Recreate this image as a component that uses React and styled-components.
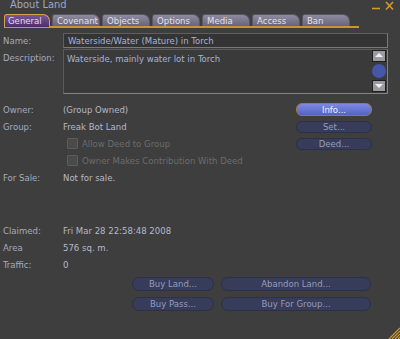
import React from 'react';
import styled, { createGlobalStyle } from 'styled-components';

const GlobalStyle = createGlobalStyle`
  html, body {
    margin: 0;
    padding: 0;
    background: #3e3e3e;
  }
  body {
    font-family: "DejaVu Sans Condensed", "DejaVu Sans", sans-serif;
    font-stretch: condensed;
    font-size: 9.5px;
  }
`;

const tabs = ['General', 'Covenant', 'Objects', 'Options', 'Media', 'Access', 'Ban'];

const App = () => (
  <>
    <GlobalStyle />
    <Window>
      <TitleBar>
        <Title>About Land</Title>
        <Controls viewBox="0 0 24 10">
          <path d="M1 7.5 H9" stroke="#d49a28" strokeWidth="1.6" />
          <path d="M15 1 L22 8.5 M22 1 L15 8.5" stroke="#d49a28" strokeWidth="1.6" />
        </Controls>
      </TitleBar>

      <TabRow>
        {tabs.map((t, i) => (
          <Tab key={t} $active={i === 0}>{t}</Tab>
        ))}
      </TabRow>

      <Panel>
        <Row $height={18}>
          <Label>Name:</Label>
          <Field>Waterside/Water (Mature) in Torch</Field>
        </Row>

        <Row $height={48} $top>
          <Label $pad={3}>Description:</Label>
          <TextArea>
            <AreaText>Waterside, mainly water lot in Torch</AreaText>
            <Scroll>
              <Arrow />
              <Thumb />
              <Arrow $down />
            </Scroll>
          </TextArea>
        </Row>

        <Row $height={17} $mt={4}>
          <Label>Owner:</Label>
          <Value>(Group Owned)</Value>
          <Button $primary>Info...</Button>
        </Row>
        <Row $height={17}>
          <Label>Group:</Label>
          <Value>Freak Bot Land</Value>
          <Button>Set...</Button>
        </Row>
        <Row $height={17}>
          <Label />
          <Check />
          <Value $disabled>Allow Deed to Group</Value>
          <Button>Deed...</Button>
        </Row>
        <Row $height={17}>
          <Label />
          <Check />
          <Value $disabled>Owner Makes Contribution With Deed</Value>
        </Row>
        <Row $height={17}>
          <Label>For Sale:</Label>
          <Value>Not for sale.</Value>
        </Row>

        <Spacer />

        <Row $height={17}>
          <Label>Claimed:</Label>
          <Value>Fri Mar 28 22:58:48 2008</Value>
        </Row>
        <Row $height={17}>
          <Label>Area</Label>
          <Value>576 sq. m.</Value>
        </Row>
        <Row $height={17}>
          <Label>Traffic:</Label>
          <Value>0</Value>
        </Row>

        <ButtonGrid>
          <Button $w={82}>Buy Land...</Button>
          <Button $w={150}>Abandon Land...</Button>
          <Button $w={82}>Buy Pass...</Button>
          <Button $w={150}>Buy For Group...</Button>
        </ButtonGrid>
      </Panel>

      <Grip viewBox="0 0 12 12">
        <path d="M12 1 L1 12 M12 4 L4 12 M12 7 L7 12 M12 10 L10 12" stroke="#d09a30" strokeWidth="1.2" />
      </Grip>
    </Window>
  </>
);

export default App;

const Window = styled.div`
  position: relative;
  width: 400px;
  height: 339px;
  overflow: hidden;
  background: #3e3e3e;
  color: #a8aec2;
  display: flex;
  flex-direction: column;
`;

const TitleBar = styled.div`
  height: 14px;
  display: flex;
  align-items: flex-start;
  justify-content: space-between;
  padding: 0 5px 0 10px;
`;

const Title = styled.div`
  font-size: 11px;
  line-height: 11px;
  margin-top: -1px;
  color: #9ea6c6;
`;

const Controls = styled.svg`
  width: 24px;
  height: 10px;
  margin-top: 1px;
`;

const TabRow = styled.div`
  display: flex;
  gap: 2px;
  width: 355px;
  margin-left: 4px;
  height: 12px;
  border-bottom: 2px solid #c8943a;
`;

const Tab = styled.div`
  width: ${(p) => (p.$active ? '46px' : '48px')};
  box-sizing: border-box;
  height: ${(p) => (p.$active ? '13px' : '12px')};
  padding: 0 0 0 ${(p) => (p.$active ? '3px' : '4px')};
  line-height: 12px;
  color: ${(p) => (p.$active ? '#e4dcf4' : '#e2e2ec')};
  border-radius: 3px 7px 0 0;
  background: ${(p) =>
    p.$active
      ? 'linear-gradient(#7a5898, #4a2e6a)'
      : 'linear-gradient(#8e8aa0, #68647a)'};
  border: ${(p) => (p.$active ? '1px solid #d4a44a' : '1px solid #5a5668')};
  border-bottom: none;
  white-space: nowrap;
  overflow: hidden;
`;

const Panel = styled.div`
  display: flex;
  flex-direction: column;
  padding-top: 3px;
`;

const Row = styled.div`
  display: flex;
  align-items: ${(p) => (p.$top ? 'flex-start' : 'center')};
  height: ${(p) => p.$height}px;
  margin-top: ${(p) => p.$mt || 0}px;
  padding-left: 3px;
`;

const Label = styled.div`
  width: 60px;
  flex: none;
  padding-top: ${(p) => p.$pad || 0}px;
  color: #a4aabe;
`;

const Value = styled.div`
  flex: 1;
  white-space: nowrap;
  color: ${(p) => (p.$disabled ? '#6c6c6c' : '#b4b9ca')};
`;

const Field = styled.div`
  box-sizing: border-box;
  width: 325px;
  height: 15px;
  line-height: 13px;
  padding-left: 4px;
  background: #343434;
  border: 1px solid #7a7a7a;
  border-top-color: #5e5e5e;
  border-left-color: #5e5e5e;
  color: #a9b2d4;
`;

const TextArea = styled.div`
  box-sizing: border-box;
  width: 325px;
  height: 45px;
  display: flex;
  justify-content: space-between;
  background: #3a3a3a;
  border: 1px solid #848484;
  border-top-color: #5a5a5a;
  border-left-color: #5a5a5a;
`;

const AreaText = styled.div`
  padding: 3px 0 0 3px;
  color: #a9b2d4;
`;

const Scroll = styled.div`
  width: 14px;
  display: flex;
  flex-direction: column;
  gap: 2px;
  margin-right: 1px;
`;

const Arrow = styled.div`
  box-sizing: border-box;
  height: 12px;
  background: #9a9aa0;
  border: 1px solid #1e1e1e;
  position: relative;
  &::after {
    content: '';
    position: absolute;
    left: 2px;
    ${(p) => (p.$down ? 'top: 3px;' : 'top: 2px;')}
    border-left: 4px solid transparent;
    border-right: 4px solid transparent;
    ${(p) => (p.$down ? 'border-top: 4px solid #f0f0f0;' : 'border-bottom: 4px solid #f0f0f0;')}
  }
`;

const Thumb = styled.div`
  height: 14px;
  border-radius: 7px;
  background: #4656a8;
`;

const Check = styled.div`
  width: 9px;
  height: 9px;
  margin: 0 4px 0 4px;
  background: #4a4a4a;
  border: 1px solid #5c5c5c;
  border-radius: 1px;
`;

const Button = styled.div`
  box-sizing: border-box;
  width: ${(p) => p.$w || 76}px;
  height: ${(p) => (p.$primary ? 13 : 12)}px;
  flex: none;
  margin-right: ${(p) => (p.$w ? 0 : 28)}px;
  border-radius: 6px;
  text-align: center;
  line-height: ${(p) => (p.$primary ? 11 : 10)}px;
  color: ${(p) => (p.$primary ? '#eef0ff' : '#959cbc')};
  background: ${(p) =>
    p.$primary ? 'linear-gradient(#7c8ae4, #5462c4)' : '#363c5a'};
  border: 1px solid ${(p) => (p.$primary ? '#a07a3a' : '#2c3048')};
`;

const Spacer = styled.div`
  height: 36px;
`;

const ButtonGrid = styled.div`
  display: grid;
  grid-template-columns: 82px 150px;
  column-gap: 7px;
  row-gap: 6px;
  margin: 4px 0 0 132px;
  & > ${Button} {
    height: 14px;
    line-height: 12px;
    border-radius: 7px;
  }
`;

const Grip = styled.svg`
  position: absolute;
  right: 0;
  bottom: 0;
  width: 12px;
  height: 12px;
`;
